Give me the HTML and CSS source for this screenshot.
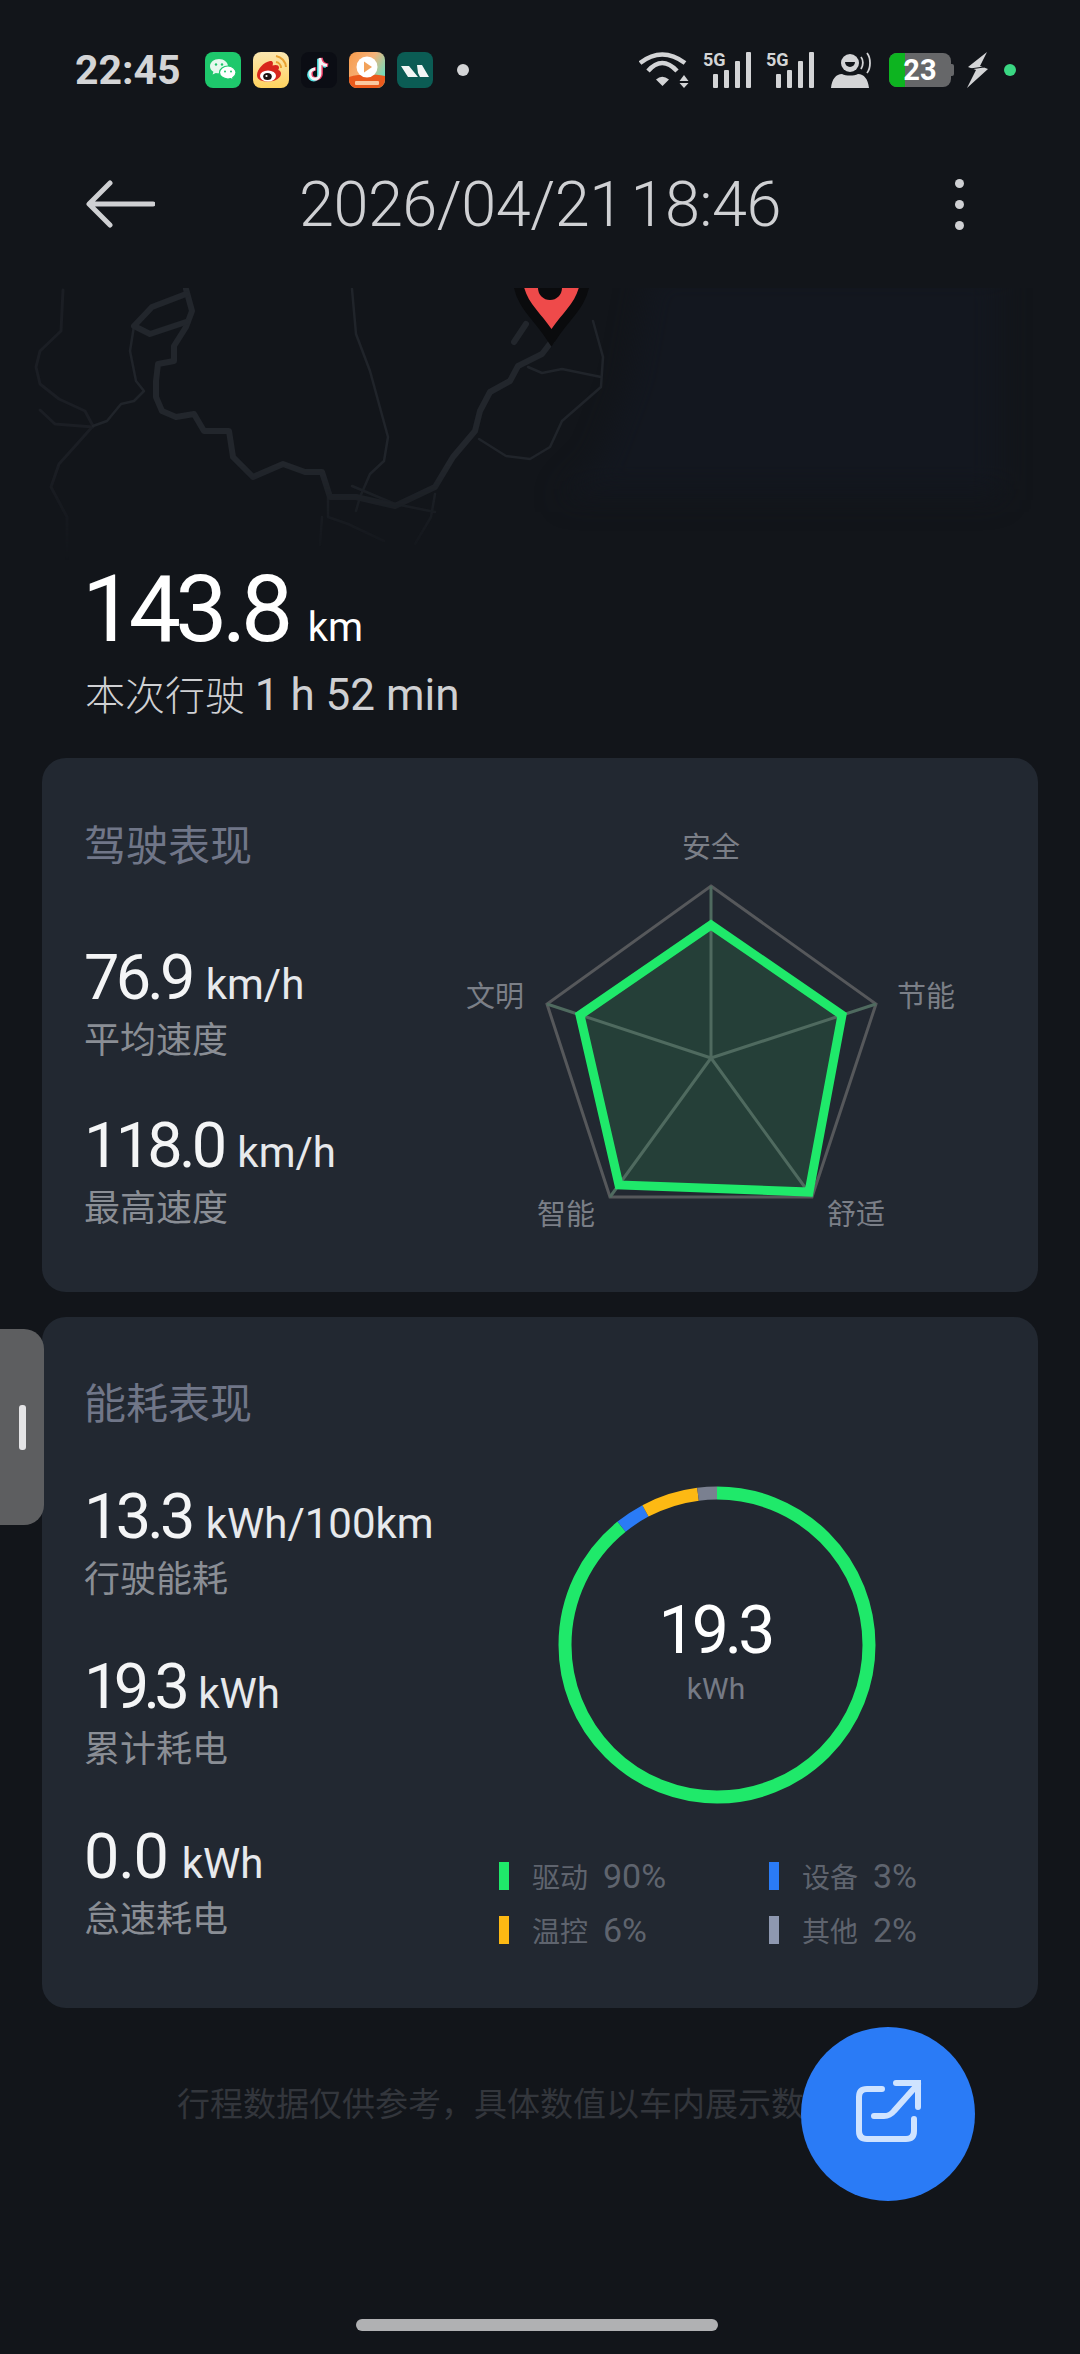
FILE: index.html
```html
<!DOCTYPE html>
<html lang="zh-CN">
  <head>
    <meta charset="UTF-8" />
    <meta name="viewport" content="width=device-width, initial-scale=1.0" />
    <title>行程详情</title>
    <link rel="stylesheet" href="styles.css">
  </head>
  <body>
    <div class="page">
      <div class="status-bar">
        <span class="clock">22:45</span>
        <div class="app-icons">
          <svg class="app-icon" viewBox="0 0 36 36">
            <rect width="36" height="36" rx="8" fill="#1ec86c" />
            <path d="M14 7c-5 0-9 3.200-9 7.200 0 2.300 1.300 4.300 3.400 5.600l-.8 2.700 3.200-1.600c1 .3 2 .4 3.200 .4 5 0 9-3.200 9-7.100S19 7 14 7z" fill="#e6f8ee" />
            <path d="M23 14c-4.700 0-8.500 3-8.500 6.500s3.800 6.500 8.500 6.500c1 0 1.800-.1 2.700-.4l2.700 1.500-.7-2.400c1.900-1.200 3.300-3 3.300-5.200 0-3.500-3.800-6.500-8-6.500z" fill="#fff" stroke="#1ec86c" stroke-width="1.200" />
            <circle cx="11" cy="12.500" r="1.200" fill="#1ec86c" />
            <circle cx="17" cy="12.500" r="1.200" fill="#1ec86c" />
            <circle cx="20" cy="19.500" r="1" fill="#1ec86c" />
            <circle cx="26" cy="19.500" r="1" fill="#1ec86c" />
          </svg>
          <svg class="app-icon" viewBox="0 0 36 36">
            <defs>
              <linearGradient id="weiboBg" x1="0" y1="0" x2="0" y2="1">
                <stop offset="0" stop-color="#fbe6b0" />
                <stop offset="1" stop-color="#ffd35f" />
              </linearGradient>
            </defs>
            <rect width="36" height="36" rx="8" fill="url(#weiboBg)" />
            <path d="M4 23c0-6 7-13 13-14 3-.5 3.500 2 2.500 4.500 3-1 6.500-.8 6.500 2 0 1-.5 2-.8 2.500 2 .6 2.800 2 2.800 3.500 0 4.500-6 8-12.500 8S4 28 4 23z" fill="#d8261c" />
            <ellipse cx="15" cy="24" rx="8" ry="5.500" fill="#fff" />
            <ellipse cx="14.500" cy="24.500" rx="4.300" ry="3.600" fill="#1b1311" />
            <circle cx="13.500" cy="24" r="1.100" fill="#fff" />
            <path d="M23 10a6 6 0 0 1 5 6M23 4a12 12 0 0 1 10 11" fill="none" stroke="#e8a030" stroke-width="2" />
          </svg>
          <svg class="app-icon" viewBox="0 0 36 36">
            <rect width="36" height="36" rx="8" fill="#0b0d14" />
            <path d="M19 6v16a5 5 0 1 1-5-5M19 7c.5 3.500 3 6 7 6.500" fill="none" stroke="#4fe3e6" stroke-width="3.400" transform="translate(-1.200 .8)" />
            <path d="M19 6v16a5 5 0 1 1-5-5M19 7c.5 3.500 3 6 7 6.500" fill="none" stroke="#ee3d66" stroke-width="3.400" transform="translate(1.200 -.3)" />
            <path d="M19 6v16a5 5 0 1 1-5-5M19 7c.5 3.500 3 6 7 6.500" fill="none" stroke="#f4f4f6" stroke-width="2.800" />
          </svg>
          <svg class="app-icon" viewBox="0 0 36 36">
            <defs>
              <linearGradient id="playBg" x1="0" y1="0" x2="1" y2="0.6">
                <stop offset="0" stop-color="#f69a4a" />
                <stop offset="0.55" stop-color="#f6b27a" />
                <stop offset="1" stop-color="#6fdcbc" />
              </linearGradient>
            </defs>
            <rect width="36" height="36" rx="8" fill="url(#playBg)" />
            <path d="M0 25c10-3 24-3 36-1v4a8 8 0 0 1-8 8H8a8 8 0 0 1-8-8z" fill="#ea5a1c" />
            <circle cx="18" cy="15" r="10.500" fill="#fff" />
            <path d="M15 9.500l8 5.500-8 5.500z" fill="#f2a25a" />
            <rect x="6" y="29" width="24" height="4" rx="1" fill="#fbc9a0" />
          </svg>
          <svg class="app-icon" viewBox="0 0 36 36">
            <rect width="36" height="36" rx="8" fill="#0b5c54" />
            <path d="M4 14h8l9 11H11zM20 13h5l7 12h-9l-2-4z" fill="#f2f6f5" />
          </svg>
        </div>
        <span class="more-dot"></span>
        <div class="status-right">
          <svg class="wifi" viewBox="0 0 50 36">
            <path d="M1 11Q23-6 46 11" fill="none" stroke="#d3d4d6" stroke-width="4.500" />
            <path d="M9 19Q23 3 38 19" fill="none" stroke="#d3d4d6" stroke-width="4.500" />
            <path d="M17 27.500Q23 22 30 27.500L23.500 34z" fill="#d3d4d6" />
            <path d="M45 23l4.500 6h-9zM40.500 31h9L45 36z" fill="#d3d4d6" />
          </svg>
          <div class="signal">
            <span class="net-label">5G</span>
            <svg class="signal-bars" viewBox="0 0 48 36">
              <rect x="10" y="22" width="5" height="14" rx="1" />
              <rect x="21" y="18" width="5" height="18" rx="1" />
              <rect x="32" y="9" width="5" height="27" rx="1" />
              <rect x="43" y="0" width="5" height="36" rx="1" />
            </svg>
          </div>
          <div class="signal">
            <span class="net-label">5G</span>
            <svg class="signal-bars" viewBox="0 0 48 36">
              <rect x="10" y="22" width="5" height="14" rx="1" />
              <rect x="21" y="18" width="5" height="18" rx="1" />
              <rect x="32" y="9" width="5" height="27" rx="1" />
              <rect x="43" y="0" width="5" height="36" rx="1" />
            </svg>
          </div>
          <svg class="person" viewBox="0 0 42 36">
            <circle cx="20" cy="11" r="9" fill="#d3d4d6" />
            <path d="M15 10h10a5 5 0 0 1-10 0z" fill="#12151a" />
            <path d="M1 36c1-9 5-14 11-14 4 2 12 2 16 0 6 0 10 5 11 14z" fill="#d3d4d6" />
            <path d="M31 5c2.500 3 2.500 8 0 12M37 1c4 5 4 15 0 20" fill="none" stroke="#d3d4d6" stroke-width="1.800" />
          </svg>
          <div class="battery">
            <div class="battery-body">
              <span class="battery-fill"></span>
              <span class="battery-level">23</span>
            </div>
            <span class="battery-tip"></span>
          </div>
          <svg class="bolt" viewBox="0 0 21 36">
            <path d="M20 0L1 15l8 3-9 18 21-19-8-3z" fill="#d3d4d6" />
            <path d="M3 17l14-2" stroke="#12151a" stroke-width="1" />
          </svg>
          <span class="cam-dot"></span>
        </div>
      </div>

      <div class="top-bar">
        <svg class="back-icon" viewBox="0 0 70 48">
          <path d="M68 24H5M25 3L4 24l21 21" fill="none" stroke="#cfd0d3" stroke-width="5" stroke-linecap="round" stroke-linejoin="round" />
        </svg>
        <h1 class="top-title">2026/04/21 18:46</h1>
        <div class="menu-icon"><span></span><span></span><span></span></div>
      </div>

      <div class="map">
        <svg class="map-lines" viewBox="0 288 1080 272">
          <polygon class="water" points="650,270 1000,270 1000,500 560,500 600,460 630,380" />
          <g class="road-faint">
            <path d="M93 426L85 411 59 399 40 384 36 367 40 351 61 331 63 290" />
            <path d="M93 426L77 444 59 464 51 487 67 517 67 560" />
            <path d="M93 427L55 424 40 410" />
          </g>
          <g class="road-thin">
            <path d="M134 326L130 351 136 381 144 391 134 401 121 404 107 421 93 426" />
            <path d="M352 289L356 334 370 371 388 437 384 461 370 474 360 497 356 511" />
            <path d="M593 321L603 357 601 387 562 421 550 447 530 459 506 456 479 439" />
            <path d="M528 367L542 373 562 369 601 377" />
            <path d="M352 486L395 504 435 512" />
            <path d="M435 494L431 517 415 544" />
            <path d="M328 497L328 517 348 524 384 541" />
            <path d="M322 517L320 545" />
          </g>
          <g class="road-main">
            <path d="M552 341L542 354 518 366 510 381 490 392 480 411 475 431 453 457 435 487 395 506 356 497 330 497 322 472 305 472 283 464 253 477 233 457 229 431 204 431 194 414 176 417 162 411 156 397 156 381 158 364 174 361 174 346 186 327 192 311 186 289" />
            <path d="M186 294L152 307 134 326 150 334 186 322" />
            <path d="M514 342L526 324" />
          </g>
          <g class="pin">
            <path class="pin-shadow" d="M551.500 329C540 312 524 300 523 280A28 28 0 0 1 580 280C579 300 563 312 551.500 329Z" />
            <path class="pin-body" d="M551.500 329C540 312 524 300 523 280A28 28 0 0 1 580 280C579 300 563 312 551.500 329Z" />
            <circle class="pin-hole" cx="550" cy="288" r="12" />
          </g>
        </svg>
      </div>

      <div class="summary">
        <div class="summary-value">143.8<span class="summary-unit">km</span></div>
        <div class="summary-sub">本次行驶 <span class="summary-time">1 h 52 min</span></div>
      </div>

      <section class="card card-drive">
        <div class="card-left">
          <h2 class="card-title">驾驶表现</h2>
          <div class="stat">
            <div class="stat-value">76.9<span class="stat-unit">km/h</span></div>
            <div class="stat-label">平均速度</div>
          </div>
          <div class="stat">
            <div class="stat-value">118.0<span class="stat-unit">km/h</span></div>
            <div class="stat-label">最高速度</div>
          </div>
        </div>
        <svg class="radar" viewBox="450 820 550 430">
          <polygon class="radar-area" points="711,925 842,1015 809,1192 619,1185 580,1015" />
          <g class="radar-grid">
            <polygon points="711,886 876,1004 812,1197 610,1197 547,1004" />
            <path d="M711 1058L711 886M711 1058L876 1004M711 1058L812 1197M711 1058L610 1197M711 1058L547 1004" />
          </g>
          <polygon class="radar-line" points="711,925 842,1015 809,1192 619,1185 580,1015" />
          <text class="radar-label" x="711" y="858">安全</text>
          <text class="radar-label" x="926" y="1007">节能</text>
          <text class="radar-label" x="495" y="1007">文明</text>
          <text class="radar-label" x="566" y="1225">智能</text>
          <text class="radar-label" x="856" y="1225">舒适</text>
        </svg>
      </section>

      <section class="card card-energy">
        <div class="card-left">
          <h2 class="card-title">能耗表现</h2>
          <div class="stat">
            <div class="stat-value">13.3<span class="stat-unit">kWh/100km</span></div>
            <div class="stat-label">行驶能耗</div>
          </div>
          <div class="stat">
            <div class="stat-value stat-value-tight">19.3<span class="stat-unit">kWh</span></div>
            <div class="stat-label">累计耗电</div>
          </div>
          <div class="stat">
            <div class="stat-value stat-value-wide">0.0<span class="stat-unit">kWh</span></div>
            <div class="stat-label">怠速耗电</div>
          </div>
        </div>
        <div class="card-right">
          <svg class="donut" viewBox="0 0 330 330">
            <g class="donut-ring">
              <circle class="seg seg-drive" cx="165" cy="165" r="152" pathLength="100" stroke-dasharray="89.2 10.8" stroke-dashoffset="0" />
              <circle class="seg seg-device" cx="165" cy="165" r="152" pathLength="100" stroke-dasharray="3 97" stroke-dashoffset="-89.2" />
              <circle class="seg seg-heat" cx="165" cy="165" r="152" pathLength="100" stroke-dasharray="5.800 94.200" stroke-dashoffset="-92.200" />
              <circle class="seg seg-other" cx="165" cy="165" r="152" pathLength="100" stroke-dasharray="2 98" stroke-dashoffset="-98" />
            </g>
            <text class="donut-value" x="163" y="173">19.3</text>
            <text class="donut-unit" x="164" y="219">kWh</text>
          </svg>
          <div class="legend">
            <div class="legend-item"><i class="swatch swatch-drive"></i>驱动<b>90%</b></div>
            <div class="legend-item"><i class="swatch swatch-device"></i>设备<b>3%</b></div>
            <div class="legend-item"><i class="swatch swatch-heat"></i>温控<b>6%</b></div>
            <div class="legend-item"><i class="swatch swatch-other"></i>其他<b>2%</b></div>
          </div>
        </div>
      </section>

      <p class="note">行程数据仅供参考，具体数值以车内展示数据为准</p>
      <div class="home-bar"></div>

      <div class="side-handle"><span></span></div>
      <button class="share-btn">
        <svg viewBox="0 0 100 90">
          <path d="M41 20H26Q18 20 18 28V62Q18 70 26 70H65Q73 70 73 62V50" fill="none" stroke="#cfe3ff" stroke-width="6" stroke-linecap="round" />
          <path d="M33 47H43Q49 47 53 42L77 15M55 14H77V38" fill="none" stroke="#cfe3ff" stroke-width="6" stroke-linecap="round" />
        </svg>
      </button>
    </div>
  </body>
</html>
```

FILE: styles.css
```css
* {
  box-sizing: border-box;
}
html,
body {
  margin: 0;
  padding: 0;
  background-color: #12151a;
}
.page {
  position: relative;
  width: 1080px;
  height: 2354px;
  overflow: hidden;
  background-color: #12151a;
  font-family: Roboto, "Noto Sans CJK SC", sans-serif;
}

/* status bar */
.status-bar {
  display: flex;
  align-items: center;
  height: 140px;
  padding: 0 64px 0 75px;
}
.clock {
  width: 130px;
  font-size: 41px;
  font-weight: 700;
  color: #d3d4d6;
}
.app-icons {
  display: flex;
  gap: 12px;
}
.app-icon {
  display: block;
  width: 36px;
  height: 36px;
}
.more-dot {
  width: 12px;
  height: 12px;
  margin-left: 24px;
  border-radius: 50%;
  background-color: #d3d4d6;
}
.status-right {
  display: flex;
  align-items: center;
  margin-left: auto;
}
.wifi {
  width: 50px;
  height: 36px;
}
.signal {
  position: relative;
  width: 48px;
  height: 36px;
  margin-left: 14px;
}
.net-label {
  position: absolute;
  left: 0;
  top: 0;
  font-size: 18px;
  font-weight: 700;
  line-height: 16px;
  color: #d3d4d6;
}
.signal-bars {
  display: block;
  width: 48px;
  height: 36px;
  fill: #d3d4d6;
}
.signal + .signal {
  margin-left: 15px;
}
.person {
  width: 42px;
  height: 36px;
  margin-left: 16px;
}
.battery {
  display: flex;
  align-items: center;
  margin-left: 17px;
}
.battery-body {
  position: relative;
  width: 62px;
  height: 34px;
  overflow: hidden;
  border-radius: 8px;
  background-color: #666769;
  text-align: center;
}
.battery-fill {
  position: absolute;
  left: 0;
  top: 0;
  width: 16px;
  height: 34px;
  background-color: #0db420;
}
.battery-level {
  position: relative;
  font-size: 29px;
  font-weight: 700;
  line-height: 34px;
  color: #fff;
}
.battery-tip {
  width: 3px;
  height: 12px;
  border-radius: 0 2px 2px 0;
  background-color: #666769;
}
.bolt {
  width: 21px;
  height: 36px;
  margin-left: 13px;
}
.cam-dot {
  width: 12px;
  height: 12px;
  margin-left: 16px;
  border-radius: 50%;
  background-color: #3ad783;
}

/* header */
.top-bar {
  display: flex;
  align-items: center;
  justify-content: space-between;
  height: 128px;
  padding: 0 85px;
}
.back-icon {
  width: 70px;
  height: 48px;
}
.top-title {
  margin: 0;
  font-size: 63px;
  font-weight: 300;
  letter-spacing: -0.5px;
  word-spacing: -8px;
  color: #cfd0d3;
}
.menu-icon {
  display: flex;
  flex-direction: column;
  align-items: center;
  gap: 12px;
  width: 70px;
}
.menu-icon span {
  width: 9px;
  height: 9px;
  border-radius: 50%;
  background-color: #cfd0d3;
}

/* map */
.map {
  height: 272px;
  margin-top: 20px;
}
.map-lines {
  display: block;
  width: 1080px;
  height: 272px;
  -webkit-mask-image: linear-gradient(to bottom, #000 65%, transparent 100%);
  mask-image: linear-gradient(to bottom, #000 65%, transparent 100%);
}
.water {
  fill: #13171f;
  filter: blur(14px);
}
.road-faint path,
.road-thin path,
.road-main path {
  fill: none;
  stroke-linejoin: round;
  stroke-linecap: round;
}
.road-faint path {
  stroke: #1b1e24;
  stroke-width: 3;
}
.road-thin path {
  stroke: #20242a;
  stroke-width: 2.5;
}
.road-main path {
  stroke: #22262c;
  stroke-width: 6;
}
.pin-shadow {
  fill: #0a0b0d;
  stroke: #0a0b0d;
  stroke-width: 20;
  stroke-linejoin: miter;
}
.pin-body {
  fill: #ef4a4a;
}
.pin-hole {
  fill: #0a0b0d;
}

/* summary */
.summary {
  height: 198px;
  padding: 0 0 0 85px;
}
.summary-value {
  margin-left: -3px;
  font-size: 93px;
  font-weight: 400;
  line-height: 100px;
  letter-spacing: -0.06em;
  color: #fff;
}
.summary-unit {
  margin-left: 20px;
  font-size: 40px;
  line-height: 1;
  letter-spacing: 0;
}
.summary-sub {
  margin-top: 12px;
  font-size: 40px;
  font-weight: 300;
  line-height: 50px;
  color: #cfd0d3;
}
.summary-time {
  font-size: 44px;
  font-weight: 400;
  line-height: 1;
}

/* cards */
.card {
  display: flex;
  margin: 0 42px;
  border-radius: 24px;
  background-color: #222831;
}
.card-drive {
  height: 534px;
  margin-bottom: 25px;
}
.card-energy {
  height: 691px;
}
.card-left {
  width: 408px;
  flex: none;
  padding-left: 42px;
}
.card-title {
  margin: 65px 0 74px;
  font-size: 42px;
  font-weight: 400;
  line-height: 48px;
  color: #707688;
}
.card-energy .card-title {
  margin: 64px 0 55px;
}
.stat {
  margin-bottom: 49px;
}
.card-energy .stat {
  margin-bottom: 51px;
}
.stat-value {
  font-size: 63px;
  font-weight: 400;
  line-height: 66px;
  letter-spacing: -0.06em;
  color: #f4f5f6;
}
.stat-value-tight {
  letter-spacing: -0.09em;
}
.stat-value-wide {
  letter-spacing: -0.02em;
}
.stat-unit {
  margin-left: 14px;
  font-size: 42px;
  line-height: 1;
  letter-spacing: 0;
  color: #e7e9ec;
}
.stat-label {
  margin-top: 7px;
  font-size: 36px;
  line-height: 46px;
  color: #8a8e95;
}

/* radar chart */
.radar {
  display: block;
  flex: none;
  width: 550px;
  height: 430px;
  margin-top: 62px;
}
.radar-grid polygon,
.radar-grid path {
  fill: none;
  stroke: #56585b;
  stroke-width: 3;
}
.radar-area {
  fill: #253f38;
}
.radar-grid path {
  stroke: #4f6a5f;
}
.radar-line {
  fill: none;
  stroke: #1fe96a;
  stroke-width: 9;
  stroke-linejoin: miter;
}
.radar-label {
  font-size: 29px;
  text-anchor: middle;
  fill: #7b7f87;
}

/* energy ring */
.card-right {
  flex: 1;
}
.donut {
  display: block;
  width: 330px;
  height: 330px;
  margin: 163px 0 0 102px;
}
.seg {
  fill: none;
  stroke-width: 13;
  transform: rotate(-90deg);
  transform-origin: 165px 165px;
}
.seg-drive {
  stroke: #1fe96a;
}
.seg-device {
  stroke: #2a7bf6;
}
.seg-heat {
  stroke: #fdb913;
}
.seg-other {
  stroke: #7a8090;
}
.donut-value {
  font-size: 66px;
  letter-spacing: -0.06em;
  text-anchor: middle;
  fill: #fff;
}
.donut-unit {
  font-size: 30px;
  text-anchor: middle;
  fill: #757a85;
}
.legend {
  display: grid;
  grid-template-columns: 270px 1fr;
  row-gap: 14px;
  margin: 46px 0 0 49px;
}
.legend-item {
  display: flex;
  align-items: center;
  height: 40px;
  font-size: 28px;
  color: #5f646e;
}
.legend-item b {
  margin-left: 15px;
  font-size: 34px;
  font-weight: 400;
}
.swatch {
  width: 10px;
  height: 28px;
  margin-right: 23px;
}
.swatch-drive {
  background-color: #1fe96a;
}
.swatch-device {
  background-color: #2a7bf6;
}
.swatch-heat {
  background-color: #fdb913;
}
.swatch-other {
  background-color: #8e98b0;
}

/* footer */
.note {
  margin: 73px 0 0;
  font-size: 33px;
  line-height: 48px;
  text-align: center;
  color: #33363c;
}
.home-bar {
  width: 362px;
  height: 12px;
  margin: 190px 0 0 356px;
  border-radius: 6px;
  background-color: #b0b1b3;
}

/* floating bits */
.side-handle {
  position: absolute;
  left: 0;
  top: 1329px;
  display: flex;
  align-items: center;
  width: 44px;
  height: 196px;
  padding-left: 19px;
  border-radius: 0 20px 20px 0;
  background-color: #5d5e60;
}
.side-handle span {
  width: 7px;
  height: 45px;
  border-radius: 3px;
  background-color: #e4e4e6;
}
.share-btn {
  position: absolute;
  left: 801px;
  top: 2027px;
  width: 174px;
  height: 174px;
  padding: 0 0 0 6px;
  border: none;
  border-radius: 50%;
  background-color: #2a7bf6;
}
.share-btn svg {
  display: block;
  width: 100px;
  height: 90px;
  margin: 0 auto;
}
```
